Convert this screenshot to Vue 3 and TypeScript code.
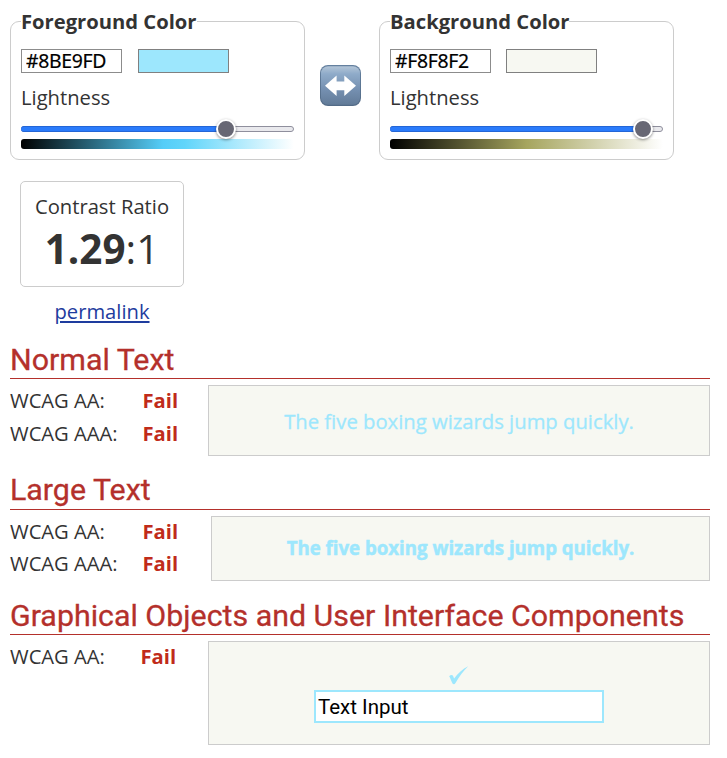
<script setup lang="ts">
import { ref } from 'vue'

interface Picker {
  id: string
  title: string
  hex: string
  level: number
}

interface Verdict {
  level: string
  result: string
}

const pickers = ref<Picker[]>([
  { id: 'fg', title: 'Foreground Color', hex: '#8BE9FD', level: 75.1 },
  { id: 'bg', title: 'Background Color', hex: '#F8F8F2', level: 93.1 },
])
const both: Verdict[] = [
  { level: 'WCAG AA:', result: 'Fail' },
  { level: 'WCAG AAA:', result: 'Fail' },
]
const single: Verdict[] = [{ level: 'WCAG AA:', result: 'Fail' }]
const sample = 'The five boxing wizards jump quickly.'
const inputText = ref('Text Input')
</script>

<template>
  <main class="checker">
    <div class="pickers">
      <fieldset v-for="p in pickers" :key="p.id" :class="['picker', p.id]">
        <legend><span>{{ p.title }}</span></legend>
        <div class="values">
          <input v-model="p.hex" class="hex" type="text" />
          <span class="swatch"></span>
        </div>
        <div class="label"><span>Lightness</span></div>
        <div class="slider">
          <div class="fill" :style="{ width: p.level + '%' }"></div>
          <div class="thumb" :style="{ left: p.level + '%' }"></div>
        </div>
        <div class="ramp"></div>
      </fieldset>
      <button class="swap" type="button">
        <svg width="41" height="41" viewBox="0 0 41 41">
          <defs>
            <linearGradient id="swapFace" x1="0" y1="0" x2="0" y2="1">
              <stop offset="0" stop-color="#b4c6d8" />
              <stop offset="0.2" stop-color="#8fabc9" />
              <stop offset="0.6" stop-color="#7590b1" />
              <stop offset="1" stop-color="#627b98" />
            </linearGradient>
            <linearGradient id="swapEdge" x1="0" y1="0" x2="0" y2="1">
              <stop offset="0" stop-color="#64809f" />
              <stop offset="1" stop-color="#536b87" />
            </linearGradient>
          </defs>
          <rect width="41" height="41" rx="8" fill="url(#swapEdge)" />
          <rect x="1" y="1.2" width="39" height="38.6" rx="7" fill="url(#swapFace)" />
          <path d="M5 20.7 L16.6 10.6 V16.4 H24.3 V10.6 L36 20.7 L24.3 31 V25.2 H16.6 V31 Z" fill="#fff" />
        </svg>
      </button>
    </div>

    <div class="ratio">
      <div class="ratio-box">
        <div class="ratio-title"><span>Contrast Ratio</span></div>
        <div class="ratio-value"><b>1.29</b>:1</div>
      </div>
      <a class="permalink" href="#">permalink</a>
    </div>

    <section class="normal">
      <h2>Normal Text</h2>
      <div class="result">
        <dl>
          <div v-for="v in both" :key="v.level" class="row">
            <dt>{{ v.level }}</dt>
            <dd>{{ v.result }}</dd>
          </div>
        </dl>
        <div class="sample"><span>{{ sample }}</span></div>
      </div>
    </section>

    <section class="large">
      <h2>Large Text</h2>
      <div class="result">
        <dl>
          <div v-for="v in both" :key="v.level" class="row">
            <dt>{{ v.level }}</dt>
            <dd>{{ v.result }}</dd>
          </div>
        </dl>
        <div class="sample"><span>{{ sample }}</span></div>
      </div>
    </section>

    <section class="graphics">
      <h2>Graphical Objects and User Interface Components</h2>
      <div class="result">
        <dl>
          <div v-for="v in single" :key="v.level" class="row">
            <dt>{{ v.level }}</dt>
            <dd>{{ v.result }}</dd>
          </div>
        </dl>
        <div class="sample">
          <svg class="check" width="20" height="19" viewBox="0 0 20 19">
            <path d="M0.2 10.2 C1.4 8.8 3 8.6 3.8 9.6 C4.4 10.4 4.7 11.8 5.1 12.6 C9 7.2 13.5 3 19.2 0.2 C14.4 5 10 10.8 6.5 17 C5.6 18.5 4.2 18.5 3.5 17.4 C2.3 15.2 1.6 12.6 0.2 10.2 Z" fill="#9de7fd" />
          </svg>
          <input v-model="inputText" class="text-input" type="text" />
        </div>
      </div>
    </section>
  </main>
</template>

<style>
body {
  margin: 0;
  background: #fff;
}
</style>

<style scoped>
* {
  box-sizing: border-box;
}
.checker {
  width: 727px;
  height: 758px;
  padding: 10px 17px 0 10px;
  color: #333;
  font: 20.2px/22px 'Open Sans', sans-serif;
}
.pickers {
  display: flex;
  align-items: flex-start;
  height: 150px;
}
.picker {
  width: 295px;
  height: 150px;
  min-width: 0;
  margin: 0;
  padding: 16px 10px 0;
  border: 1px solid #ccc;
  border-radius: 9px;
}
.picker.bg {
  order: 3;
  margin-left: 18px;
}
legend {
  height: 23px;
  padding: 0;
  font-weight: 700;
  line-height: 23px;
}
.values {
  display: flex;
  gap: 16px;
}
.bg .values {
  gap: 15px;
}
.hex {
  width: 101px;
  height: 24px;
  padding: 0 4px 2px;
  border: 1px solid #8c8c8c;
  border-radius: 0;
  outline: 0;
  background: #fff;
  color: #000;
  font: 19.4px/20px 'Noto Sans', sans-serif;
  letter-spacing: -0.3px;
  -webkit-text-stroke: 0.2px;
}
.swatch {
  width: 91px;
  height: 24px;
  border: 1px solid #808080;
}
.fg .swatch {
  background: #9de7fd;
}
.bg .swatch,
.sample {
  background: #f7f8f2;
}
.label {
  height: 24px;
  margin-top: 13px;
}
.slider {
  position: relative;
  height: 6px;
  margin-top: 16px;
  border: 1px solid #8f8f9d;
  border-radius: 3px;
  background: #e9e9ed;
}
.fill {
  height: 6px;
  margin: -1px 0 0 -1px;
  border: solid #2466d6;
  border-width: 1px 0;
  border-radius: 3px 0 0 3px;
  background: #2a7bfb;
}
.thumb {
  position: absolute;
  top: -8px;
  width: 20px;
  height: 20px;
  margin-left: -10px;
  border: 2px solid #fff;
  border-radius: 50%;
  background: #676774;
  box-shadow: 0 1px 3px rgba(0, 0, 0, 0.45);
}
.ramp {
  height: 10px;
  margin-top: 7px;
  border-radius: 3px;
}
.fg .ramp {
  background: linear-gradient(90deg, #000, #54cdf8 52%, #61d5fa 60%, #fff);
}
.bg .ramp {
  background: linear-gradient(90deg, #000, #a6a55e 50%, #fff);
}
.swap {
  order: 2;
  width: 41px;
  height: 41px;
  margin: 55px 0 0 15px;
  padding: 0;
  border: 0;
  background: none;
}
.swap svg,
.check {
  display: block;
}
.ratio {
  width: 164px;
  margin: 21px 0 0 10px;
  text-align: center;
}
.ratio-box {
  height: 106px;
  padding-top: 13px;
  border: 1px solid #ccc;
  border-radius: 5px;
}
.ratio-value {
  height: 50px;
  margin-top: 7px;
  font-size: 40.4px;
  line-height: 50px;
}
.permalink {
  display: block;
  height: 24px;
  margin-top: 13px;
  color: #1e3c9e;
}
h2 {
  height: 36px;
  margin: 0;
  border-bottom: 1px solid #b4302b;
  color: #b4302b;
  font: 400 30.36px/34px Roboto, sans-serif;
  -webkit-text-stroke: 0.3px;
  white-space: nowrap;
}
.normal {
  margin-top: 19px;
}
.result {
  display: flex;
  justify-content: space-between;
  margin-top: 6px;
}
dl {
  margin: 0;
}
.row {
  display: flex;
  height: 33px;
  line-height: 30px;
}
dt {
  width: 132.5px;
}
dd {
  margin: 0;
  color: #c02b1a;
  font-weight: 700;
}
.sample {
  display: flex;
  align-items: center;
  justify-content: center;
  width: 502px;
  height: 71px;
  border: 1px solid #ccc;
  color: #9de7fd;
}
.normal .sample {
  font-size: 20.25px;
  -webkit-text-stroke: 0.3px;
}
.large {
  margin-top: 18px;
}
.large h2 {
  line-height: 32px;
}
.large .row {
  height: 32px;
}
.large .sample {
  width: 499px;
  height: 65px;
  padding-bottom: 2px;
  font-size: 18.67px;
  font-weight: 700;
  -webkit-text-stroke: 0.5px;
}
.graphics {
  margin-top: 18px;
}
.graphics dt {
  width: 130.5px;
}
.graphics .sample {
  flex-direction: column;
  justify-content: flex-start;
  height: 104px;
  padding-top: 24px;
}
.text-input {
  width: 290px;
  height: 33px;
  margin-top: 5px;
  padding: 0 2px;
  border: 2px solid #9de7fd;
  border-radius: 0;
  outline: 0;
  background: #fff;
  color: #000;
  font: 20.5px/29px Roboto, sans-serif;
}
</style>
